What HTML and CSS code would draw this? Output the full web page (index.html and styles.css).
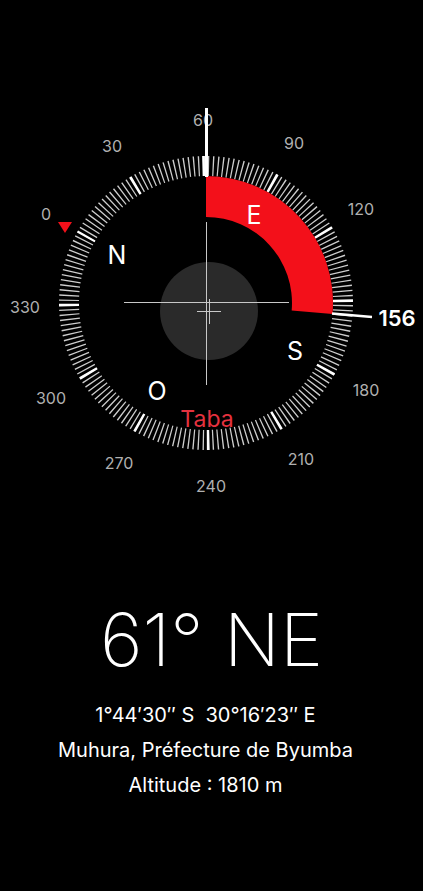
FILE: index.html
```html
<!DOCTYPE html>
<html lang="fr">
<head>
  <meta charset="UTF-8" />
  <meta name="viewport" content="width=device-width, initial-scale=1.0" />
  <title>Boussole</title>
  <link rel="stylesheet" href="styles.css">
</head>
<body>

<main class="screen">
  <svg class="dial" width="423" height="500" viewBox="0 0 423 500">
    <!-- graduations : un trait tous les 2°, trait fort tous les 30° -->
    <g transform="rotate(-151 206 303)">
      <circle class="ticks-minor" cx="206" cy="303" r="137" />
      <circle class="ticks-major" cx="206" cy="303" r="137" />
    </g>

    <!-- cap actuel -> cible (61° a 156°) -->
    <path class="bearing-arc" d="M206 176 A127 127 0 0 1 332.52 314.07 L291.67 310.5 A86 86 0 0 0 206 217 Z" />

    <!-- niveau -->
    <circle class="level-bubble" cx="209" cy="311" r="49" />
    <line class="crosshair" x1="124" y1="302.5" x2="289" y2="302.5" />
    <line class="crosshair" x1="206.5" y1="222" x2="206.5" y2="385" />
    <line class="crosshair" x1="197" y1="311.5" x2="221" y2="311.5" />
    <line class="crosshair" x1="209.5" y1="299" x2="209.5" y2="324" />

    <!-- graduations chiffrees -->
    <text class="dial-num" x="46" y="214">0</text>
    <text class="dial-num" x="112" y="146">30</text>
    <text class="dial-num" x="203" y="120">60</text>
    <text class="dial-num" x="294" y="143">90</text>
    <text class="dial-num" x="361" y="209">120</text>
    <text class="dial-num" x="366" y="390">180</text>
    <text class="dial-num" x="301" y="459">210</text>
    <text class="dial-num" x="211" y="486">240</text>
    <text class="dial-num" x="119" y="463">270</text>
    <text class="dial-num" x="51" y="398">300</text>
    <text class="dial-num" x="25" y="307">330</text>

    <text class="dial-cardinal" x="117" y="255">N</text>
    <text class="dial-cardinal" x="254" y="215">E</text>
    <text class="dial-cardinal" x="295" y="351">S</text>
    <text class="dial-cardinal" x="157" y="391">O</text>

    <text class="dial-place" x="207" y="419">Taba</text>

    <polygon class="north-mark" points="58,222 72,222 65,233" />

    <!-- index du cap et repere de la cible -->
    <line class="heading-index" x1="206.5" y1="108" x2="206.5" y2="177" />
    <line class="target-index" x1="332" y1="313.5" x2="372" y2="317" />
    <text class="dial-target" x="397" y="318">156</text>
  </svg>

  <section class="readout">
    <h1 class="heading">61° NE</h1>
    <p class="info">1°44′30″ S&nbsp; 30°16′23″ E</p>
    <p class="info">Muhura, Préfecture de Byumba</p>
    <p class="info">Altitude : 1810 m</p>
  </section>
</main>

</body>
</html>
```

FILE: styles.css
```css
* { box-sizing: border-box; }
body {
  margin: 0;
  padding: 0;
  background: #000;
  color: #fff;
  font-family: Inter, 'Liberation Sans', sans-serif;
}
.screen {
  width: 423px;
  height: 891px;
  overflow: hidden;
}
.dial { display: block; }
.dial text {
  text-anchor: middle;
  dominant-baseline: central;
  font-family: Inter, 'Liberation Sans', sans-serif;
}
.ticks-minor {
  fill: none;
  stroke: #cdcdcd;
  stroke-width: 20;
  stroke-dasharray: 1.3 3.4822;
  stroke-dashoffset: 0.65;
}
.ticks-major {
  fill: none;
  stroke: #fff;
  stroke-width: 20;
  stroke-dasharray: 2.6 69.133;
  stroke-dashoffset: 1.3;
}
.bearing-arc { fill: #f3101a; }
.level-bubble { fill: #2a2a2a; }
.crosshair { stroke: #c8c8c8; stroke-width: 1; }
.dial-num { fill: #b0b0b0; font-size: 16px; }
.dial-cardinal { fill: #fff; font-size: 25px; }
.dial-place { fill: #e5323f; font-size: 23px; }
.dial-target { fill: #fff; font-size: 22px; font-weight: 600; }
.north-mark { fill: #f3101a; }
.heading-index { stroke: #fff; stroke-width: 3; }
.target-index { stroke: #fff; stroke-width: 2.5; }
.readout {
  text-align: center;
  padding-top: 103px;
}
.heading {
  margin: 0 0 22px;
  font-size: 73px;
  font-weight: 200;
  line-height: 1;
}
.info {
  margin: 0;
  padding-right: 12px;
  font-size: 20px;
  line-height: 35px;
}
```
